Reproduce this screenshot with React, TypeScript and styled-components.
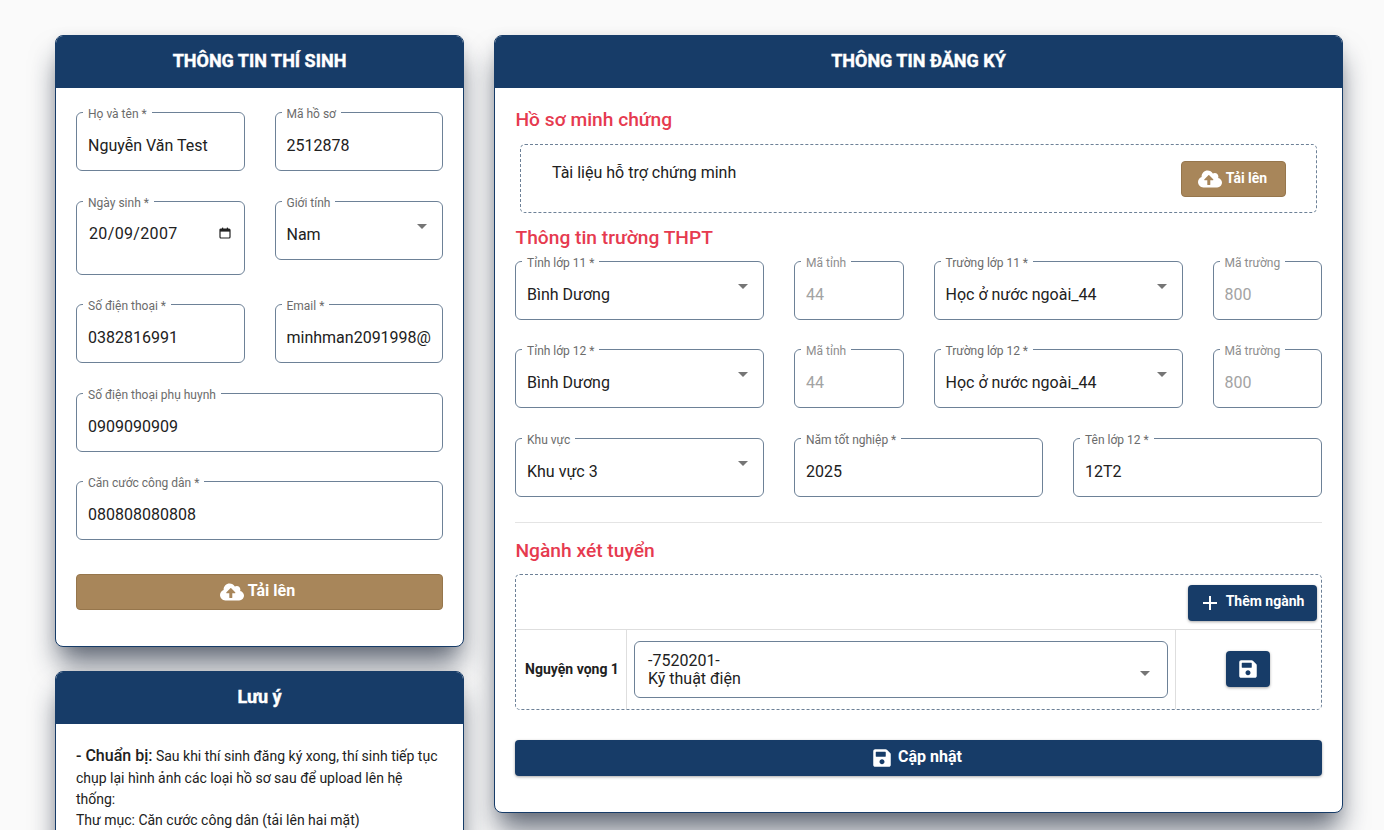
import React from "react";
import styled, { createGlobalStyle } from "styled-components";
import { FaCloudUploadAlt, FaSave } from "react-icons/fa";

const Global = createGlobalStyle`
  html, body { margin: 0; padding: 0; background: #fafafa; height: 830px; overflow: hidden; }
  body { font-family: Roboto, "Noto Sans", sans-serif; color: #212121; }
  * { box-sizing: border-box; }
`;

const navy = "#173c68";
const gold = "#a8865a";

const Page = styled.div`
  display: flex;
  align-items: flex-start;
  gap: 30px;
  padding: 35px 41px 0 55px;
  height: 830px;
  overflow: hidden;
`;
const LeftColumn = styled.div`
  width: 409px;
  flex: none;
  display: flex;
  flex-direction: column;
  gap: 24px;
`;
const RightColumn = styled.div`
  flex: 1;
  min-width: 0;
`;
const Card = styled.section`
  background: #fff;
  border: 1px solid ${navy};
  border-radius: 8px;
  box-shadow: 0 20px 28px -4px rgba(20, 30, 50, 0.65), 0 0 12px rgba(0, 0, 0, 0.06);
  overflow: hidden;
`;
const CardTitle = styled.h2`
  margin: 0;
  height: 52px;
  background: ${navy};
  color: #fff;
  font-size: 18px;
  font-weight: 700;
  line-height: 50px;
  text-align: center;
  -webkit-text-stroke: 0.4px #fff;
`;
const PersonBody = styled.div`
  padding: 24px 20px 36px;
`;
const PersonGrid = styled.div`
  display: grid;
  grid-template-columns: repeat(2, 1fr);
  column-gap: 30px;
  row-gap: 29.6px;
  align-items: start;
`;
const Field = styled.div<{ $span?: number; $height?: number }>`
  position: relative;
  grid-column: span ${(p) => p.$span ?? 1};
  height: ${(p) => p.$height ?? 59}px;
  border: 1px solid #6d8197;
  border-radius: 6px;
  padding: 0 11px;
  display: flex;
  align-items: flex-start;
  justify-content: space-between;
  min-width: 0;
`;
const FieldLabel = styled.label<{ $muted?: boolean }>`
  position: absolute;
  top: -5px;
  left: 6px;
  padding: 0 5px;
  background: #fff;
  font-size: 12px;
  line-height: 13px;
  color: ${(p) => (p.$muted ? "#8d8d8d" : "#6b6b6b")};
  white-space: nowrap;
`;
const Value = styled.span<{ $disabled?: boolean }>`
  margin-top: 23px;
  font-size: 16px;
  line-height: 19px;
  color: ${(p) => (p.$disabled ? "#a3a3a3" : "#212121")};
  white-space: nowrap;
  overflow: hidden;
  flex: 1;
  min-width: 0;
`;
const DateValue = styled(Value)`
  margin-top: 22px;
  margin-left: 1px;
  letter-spacing: 0.35px;
`;
const ArrowIcon = styled.svg`
  flex: none;
  width: 24px;
  height: 24px;
  fill: #757575;
  margin: 12px -3px 0 0;
`;
const CalendarIcon = styled.svg`
  flex: none;
  width: 12px;
  height: 12px;
  margin: 25px 2px 0 0;
`;
const ButtonLabel = styled.span`
  margin-bottom: 3px;
`;
const UploadFull = styled.button`
  margin-top: 34px;
  width: 100%;
  height: 36px;
  background: ${gold};
  border: 1px solid #96764c;
  border-radius: 4px;
  color: #fff;
  font: 700 16px Roboto, sans-serif;
  display: flex;
  align-items: center;
  justify-content: center;
  gap: 4px;
  padding: 0 10px 0 6px;
`;
const NoteBody = styled.div`
  padding: 21px 20px 20px;
  font-size: 14px;
  line-height: 21.3px;
  color: #212121;
`;
const NoteLead = styled.strong`
  font-size: 16px;
  font-weight: 500;
`;
const RegisterBody = styled.div`
  padding: 0 20px 36px;
  display: flex;
  flex-direction: column;
`;
const SectionTitle = styled.h3<{ $top: number; $bottom: number }>`
  margin: ${(p) => p.$top}px 0 ${(p) => p.$bottom}px;
  font-size: 19.2px;
  font-weight: 500;
  line-height: 24px;
  color: #e63a4f;
  margin-left: 0.5px;
`;
const DocBox = styled.div`
  margin: 0 5px;
  height: 69px;
  border: 1px dashed #6d8197;
  border-radius: 5px;
  padding: 16px 30px 0 31px;
  display: flex;
  justify-content: space-between;
  align-items: flex-start;
  font-size: 16px;
  line-height: 24px;
`;
const UploadSmall = styled.button`
  width: 105px;
  height: 36px;
  background: ${gold};
  border: 1px solid #96764c;
  border-radius: 4px;
  color: #fff;
  font: 700 14px Roboto, sans-serif;
  display: flex;
  align-items: center;
  justify-content: center;
  gap: 4px;
  padding-right: 8px;
`;
const SchoolGrid = styled.div`
  display: grid;
  grid-template-columns: repeat(12, 1fr);
  column-gap: 30px;
  row-gap: 29.4px;
`;
const Divider = styled.hr`
  border: 0;
  border-top: 1px solid #e4e4e4;
  margin: 25px 0 0;
  width: 100%;
`;
const MajorBox = styled.div`
  border: 1px dashed #6d8197;
  border-radius: 5px;
  height: 136px;
  display: flex;
  flex-direction: column;
`;
const MajorToolbar = styled.div`
  height: 55px;
  padding: 10px 4px 0 0;
  display: flex;
  justify-content: flex-end;
  border-bottom: 1px solid #dedede;
`;
const NavyButton = styled.button`
  background: ${navy};
  border: 0;
  border-radius: 4px;
  color: #fff;
  font: 700 14px Roboto, sans-serif;
  display: flex;
  align-items: center;
  justify-content: center;
  box-shadow: 0 1px 3px rgba(0, 0, 0, 0.35);
`;
const AddButton = styled(NavyButton)`
  width: 129px;
  height: 36px;
  gap: 4px;
  padding: 0 3px 0 0;
`;
const SaveButton = styled(NavyButton)`
  width: 44px;
  height: 36px;
`;
const UpdateButton = styled(NavyButton)`
  margin-top: 30px;
  width: 100%;
  height: 36px;
  gap: 6px;
  font-size: 16px;
  padding: 0 3px 0 0;
`;
const MajorRow = styled.div`
  flex: 1;
  display: grid;
  grid-template-columns: 111px 1fr 145px;
`;
const RankCell = styled.div`
  display: flex;
  align-items: center;
  justify-content: center;
  padding-left: 2px;
  font-size: 14px;
  font-weight: 700;
  border-right: 1px solid #dedede;
  white-space: nowrap;
`;
const SelectCell = styled.div`
  padding: 11px 7px 0;
  border-right: 1px solid #dedede;
`;
const SaveCell = styled.div`
  display: flex;
  justify-content: center;
  padding: 21px 2px 0 0;
`;
const MajorSelect = styled.div`
  height: 57px;
  border: 1px solid #6d8197;
  border-radius: 6px;
  padding: 10px 11px 0 13px;
  display: flex;
  justify-content: space-between;
  font-size: 16px;
  line-height: 18.5px;
`;
const MajorArrow = styled(ArrowIcon)`
  margin: 9px -1px 0 0;
`;

const Arrow = () => (
  <ArrowIcon viewBox="0 0 24 24" aria-hidden="true">
    <path d="M7 10l5 5 5-5z" />
  </ArrowIcon>
);

const Cloud = () => <FaCloudUploadAlt size={24} />;

type FieldProps = {
  label: string;
  value: string;
  span?: number;
  select?: boolean;
  disabled?: boolean;
};

const TextField = ({ label, value, span, select, disabled }: FieldProps) => (
  <Field $span={span}>
    <FieldLabel $muted={disabled}>{label}</FieldLabel>
    <Value $disabled={disabled}>{value}</Value>
    {select && <Arrow />}
  </Field>
);

export default function App() {
  return (
    <>
      <Global />
      <Page>
        <LeftColumn>
          <Card>
            <CardTitle>THÔNG TIN THÍ SINH</CardTitle>
            <PersonBody>
              <PersonGrid>
                <TextField label="Họ và tên *" value="Nguyễn Văn Test" />
                <TextField label="Mã hồ sơ" value="2512878" />
                <Field $height={74}>
                  <FieldLabel>Ngày sinh *</FieldLabel>
                  <DateValue>20/09/2007</DateValue>
                  <CalendarIcon viewBox="0 0 12 12" aria-hidden="true">
                    <rect x="1" y="2" width="10" height="9" rx="1" fill="none" stroke="#222" strokeWidth="1.2" />
                    <rect x="1" y="2" width="10" height="2.6" fill="#222" />
                    <rect x="3" y="0.6" width="1.2" height="2" fill="#222" />
                    <rect x="7.8" y="0.6" width="1.2" height="2" fill="#222" />
                  </CalendarIcon>
                </Field>
                <TextField label="Giới tính" value="Nam" select />
                <TextField label="Số điện thoại *" value="0382816991" />
                <TextField label="Email *" value="minhman2091998@gmail.com" />
                <TextField label="Số điện thoại phụ huynh" value="0909090909" span={2} />
                <TextField label="Căn cước công dân *" value="080808080808" span={2} />
              </PersonGrid>
              <UploadFull>
                <Cloud />
                <ButtonLabel>Tải lên</ButtonLabel>
              </UploadFull>
            </PersonBody>
          </Card>
          <Card>
            <CardTitle>Lưu ý</CardTitle>
            <NoteBody>
              <NoteLead>- Chuẩn bị:</NoteLead> Sau khi thí sinh đăng ký xong, thí sinh tiếp tục chụp lại hình ảnh các loại hồ sơ sau để upload lên hệ thống:
              <br />
              Thư mục: Căn cước công dân (tải lên hai mặt)
              <br />
              Thư mục: Học bạ THPT
              <br />
              Thư mục: Giấy tờ ưu tiên (nếu có)
            </NoteBody>
          </Card>
        </LeftColumn>
        <RightColumn>
          <Card>
            <CardTitle>THÔNG TIN ĐĂNG KÝ</CardTitle>
            <RegisterBody>
              <SectionTitle $top={20} $bottom={12}>Hồ sơ minh chứng</SectionTitle>
              <DocBox>
                Tài liệu hỗ trợ chứng minh
                <UploadSmall>
                  <Cloud />
                  <ButtonLabel>Tải lên</ButtonLabel>
                </UploadSmall>
              </DocBox>
              <SectionTitle $top={13} $bottom={11}>Thông tin trường THPT</SectionTitle>
              <SchoolGrid>
                <TextField span={4} label="Tỉnh lớp 11 *" value="Bình Dương" select />
                <TextField span={2} label="Mã tỉnh" value="44" disabled />
                <TextField span={4} label="Trường lớp 11 *" value="Học ở nước ngoài_44" select />
                <TextField span={2} label="Mã trường" value="800" disabled />
                <TextField span={4} label="Tỉnh lớp 12 *" value="Bình Dương" select />
                <TextField span={2} label="Mã tỉnh" value="44" disabled />
                <TextField span={4} label="Trường lớp 12 *" value="Học ở nước ngoài_44" select />
                <TextField span={2} label="Mã trường" value="800" disabled />
                <TextField span={4} label="Khu vực" value="Khu vực 3" select />
                <TextField span={4} label="Năm tốt nghiệp *" value="2025" />
                <TextField span={4} label="Tên lớp 12 *" value="12T2" />
              </SchoolGrid>
              <Divider />
              <SectionTitle $top={16} $bottom={11}>Ngành xét tuyển</SectionTitle>
              <MajorBox>
                <MajorToolbar>
                  <AddButton>
                    <svg width="24" height="24" viewBox="0 0 24 24" fill="#fff" aria-hidden="true">
                      <path d="M19 13h-6v6h-2v-6H5v-2h6V5h2v6h6v2z" />
                    </svg>
                    <ButtonLabel>Thêm ngành</ButtonLabel>
                  </AddButton>
                </MajorToolbar>
                <MajorRow>
                  <RankCell>Nguyện vọng 1</RankCell>
                  <SelectCell>
                    <MajorSelect>
                      <span>
                        -7520201-
                        <br />
                        Kỹ thuật điện
                      </span>
                      <MajorArrow viewBox="0 0 24 24" aria-hidden="true">
                        <path d="M7 10l5 5 5-5z" />
                      </MajorArrow>
                    </MajorSelect>
                  </SelectCell>
                  <SaveCell>
                    <SaveButton aria-label="Lưu">
                      <FaSave size={20} />
                    </SaveButton>
                  </SaveCell>
                </MajorRow>
              </MajorBox>
              <UpdateButton>
                <FaSave size={20} />
                <ButtonLabel>Cập nhật</ButtonLabel>
              </UpdateButton>
            </RegisterBody>
          </Card>
        </RightColumn>
      </Page>
    </>
  );
}
